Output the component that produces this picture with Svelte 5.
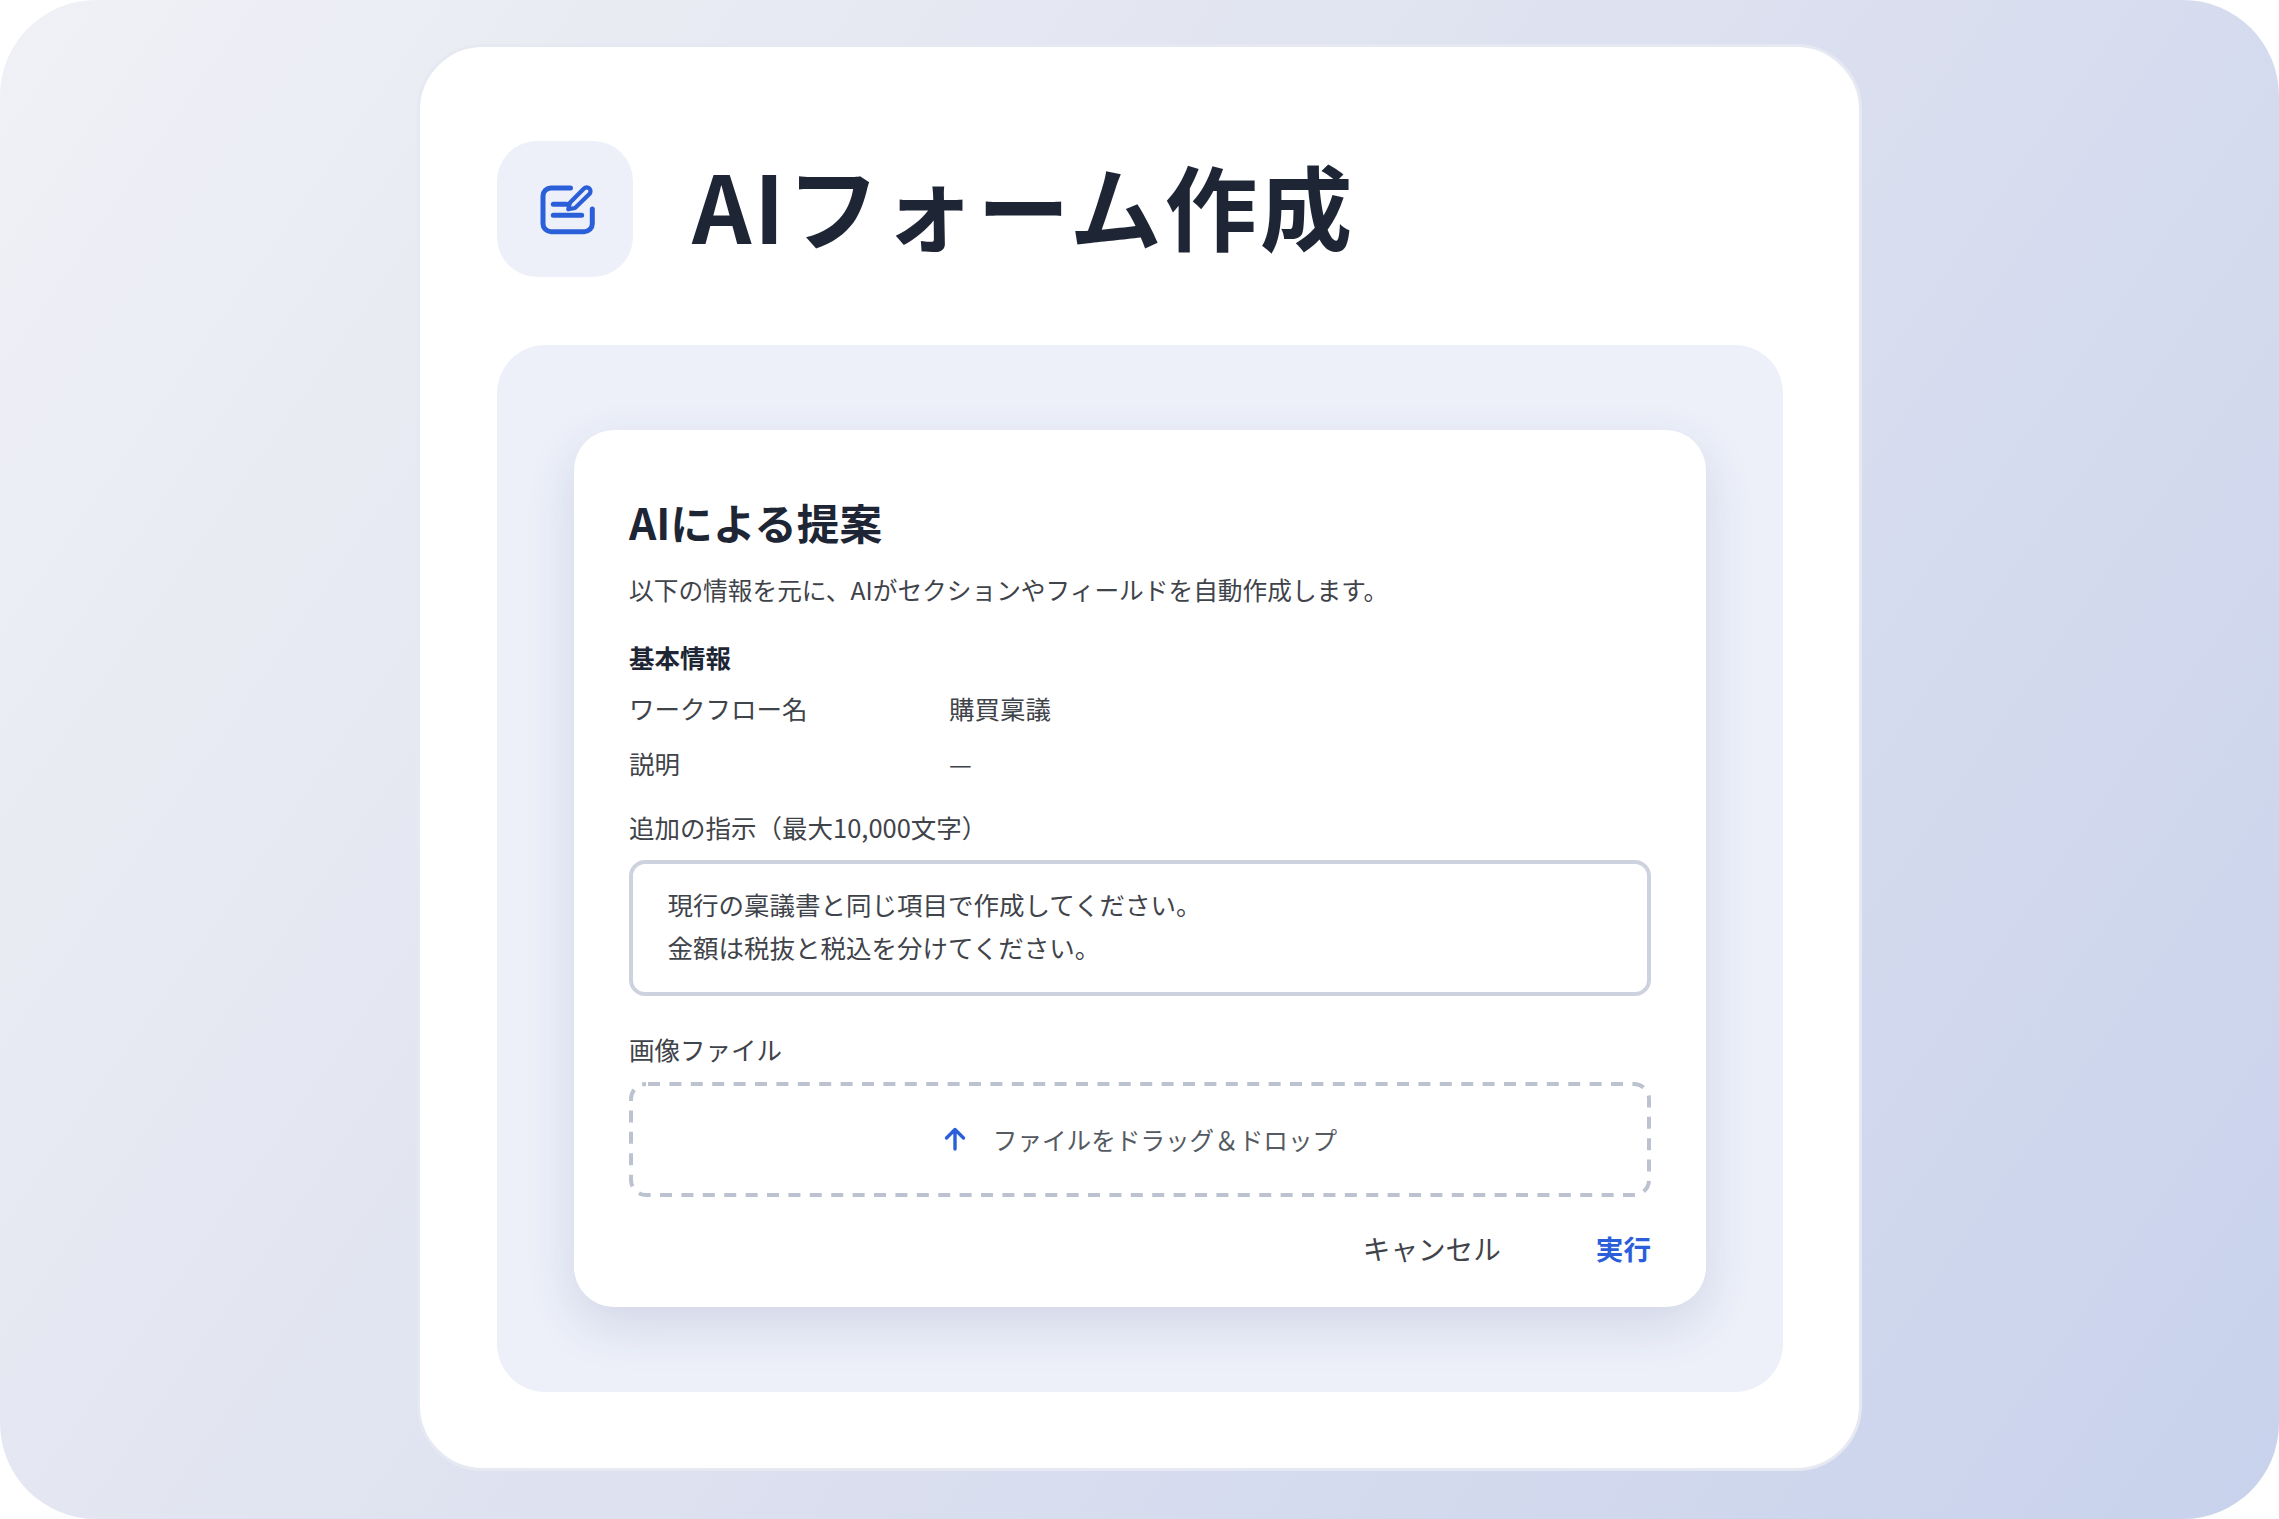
<script lang="ts">
	const info = [
		{ label: 'ワークフロー名', value: '購買稟議' },
		{ label: '説明', value: '—' }
	]
	const lines = ['現行の稟議書と同じ項目で作成してください。', '金額は税抜と税込を分けてください。']
</script>

<div class="page">
	<main class="window">
		<header class="head">
			<div class="icon-box">
				<svg width="60" height="60" viewBox="0 0 60 60" fill="none" stroke="#2b5fd9" stroke-linecap="round" stroke-linejoin="round">
					<path stroke-width="5" d="M32.5 9H13a8 8 0 0 0-8 8v27.7a8 8 0 0 0 8 8h33.3a8 8 0 0 0 8-8V30" />
					<path stroke-width="5" d="M15.3 25.3H28.7M15.3 36.3H43.7" />
					<path stroke-width="4.2" d="M30.3 30.3l1.6-6.6L46 9.5a3.8 3.8 0 0 1 5.4 5.4L37 29z" />
				</svg>
			</div>
			<h1>AIフォーム作成</h1>
		</header>

		<section class="panel">
			<div class="card">
				<h2>AIによる提案</h2>
				<p class="desc">以下の情報を元に、AIがセクションやフィールドを自動作成します。</p>

				<h3>基本情報</h3>
				{#each info as row}
					<div class="row">
						<span class="key">{row.label}</span>
						<span>{row.value}</span>
					</div>
				{/each}

				<div class="label first">追加の指示（最大10,000文字）</div>
				<div class="input">
					{#each lines as line}
						<div>{line}</div>
					{/each}
				</div>

				<div class="label second">画像ファイル</div>
				<div class="drop">
					<svg class="dash" width="1022" height="115" viewBox="0 0 1022 115" fill="none">
						<rect x="2" y="2" width="1018" height="111" rx="15" stroke="#bcc2d0" stroke-width="4" stroke-dasharray="12 9.4" stroke-dashoffset="-2" />
					</svg>
					<svg width="24" height="24" viewBox="0 0 24 24" fill="none" stroke="#2b5fd9" stroke-width="3.4" stroke-linecap="round" stroke-linejoin="round">
						<path d="M12 22V3M3.5 11L12 2.5 20.5 11" />
					</svg>
					<span>ファイルをドラッグ＆ドロップ</span>
				</div>

				<div class="actions">
					<button type="button" class="cancel">キャンセル</button>
					<button type="button" class="run">実行</button>
				</div>
			</div>
		</section>
	</main>
</div>

<style>
	:global(body) {
		background: #fff;
	}

	.page {
		width: 2279px;
		height: 1519px;
		box-sizing: border-box;
		padding-top: 44px;
		display: flex;
		justify-content: center;
		align-items: flex-start;
		border-radius: 96px;
		background: linear-gradient(125deg, #f0f1f6 0%, #e3e6f1 35%, #d9deef 60%, #c8d2ec 100%);
		font-family: 'Noto Sans CJK JP', sans-serif;
		color: #3f434a;
	}

	.window {
		width: 1445px;
		height: 1427px;
		box-sizing: border-box;
		padding: 93px 76px 0 77px;
		background: #fff;
		border: 3px solid #e6e9f2;
		border-radius: 66px;
	}

	.head {
		display: flex;
		align-items: center;
		gap: 59px;
		height: 137px;
	}

	.icon-box {
		width: 136px;
		height: 136px;
		flex: none;
		padding-left: 6px;
		box-sizing: border-box;
		display: flex;
		align-items: center;
		justify-content: center;
		background: #edf0f9;
		border-radius: 40px;
	}

	h1 {
		margin: 0;
		padding-bottom: 9px;
		font-size: 92.5px;
		font-weight: 700;
		line-height: 1;
		letter-spacing: 2.6px;
		color: #1e2635;
	}

	.panel {
		margin-top: 68px;
		height: 1047px;
		box-sizing: border-box;
		padding: 85px 77px;
		background: #edf0f9;
		border-radius: 48px;
	}

	.card {
		height: 877px;
		box-sizing: border-box;
		padding: 60px 55px 0;
		background: #fff;
		border-radius: 40px;
		box-shadow: 0 18px 50px rgba(40, 60, 120, 0.14);
		font-size: 25.5px;
		line-height: 38px;
	}

	h2 {
		margin: 0;
		font-size: 42.6px;
		font-weight: 700;
		line-height: 64px;
		color: #1e2635;
	}

	.desc {
		margin: 17px 0 0;
		font-size: 24.7px;
		line-height: 36px;
	}

	h3 {
		margin: 30.5px 0 4.5px;
		font-size: 25.5px;
		font-weight: 700;
		line-height: 38px;
		color: #1e2635;
	}

	.row {
		display: flex;
		height: 55px;
		align-items: center;
	}

	.key {
		width: 320px;
	}

	.label.first {
		margin-top: 17.5px;
	}

	.label.second {
		margin-top: 34px;
	}

	.input {
		margin-top: 14px;
		height: 136px;
		box-sizing: border-box;
		padding: 18.5px 34.5px;
		border: 4px solid #ccd2de;
		border-radius: 16px;
		line-height: 43px;
	}

	.drop {
		position: relative;
		margin-top: 14px;
		height: 115px;
		box-sizing: border-box;
		display: flex;
		align-items: center;
		justify-content: center;
		gap: 26px;
		font-size: 24.6px;
		color: #555a62;
	}

	.dash {
		position: absolute;
		left: 0;
		top: 0;
	}

	.actions {
		display: flex;
		justify-content: flex-end;
		gap: 95px;
		margin-top: 31px;
	}

	button {
		padding: 0;
		border: 0;
		background: none;
		font: inherit;
		font-size: 27.6px;
		line-height: 40px;
	}

	.cancel {
		color: #3f434a;
	}

	.run {
		color: #2b5fd9;
		font-weight: 700;
	}
</style>
